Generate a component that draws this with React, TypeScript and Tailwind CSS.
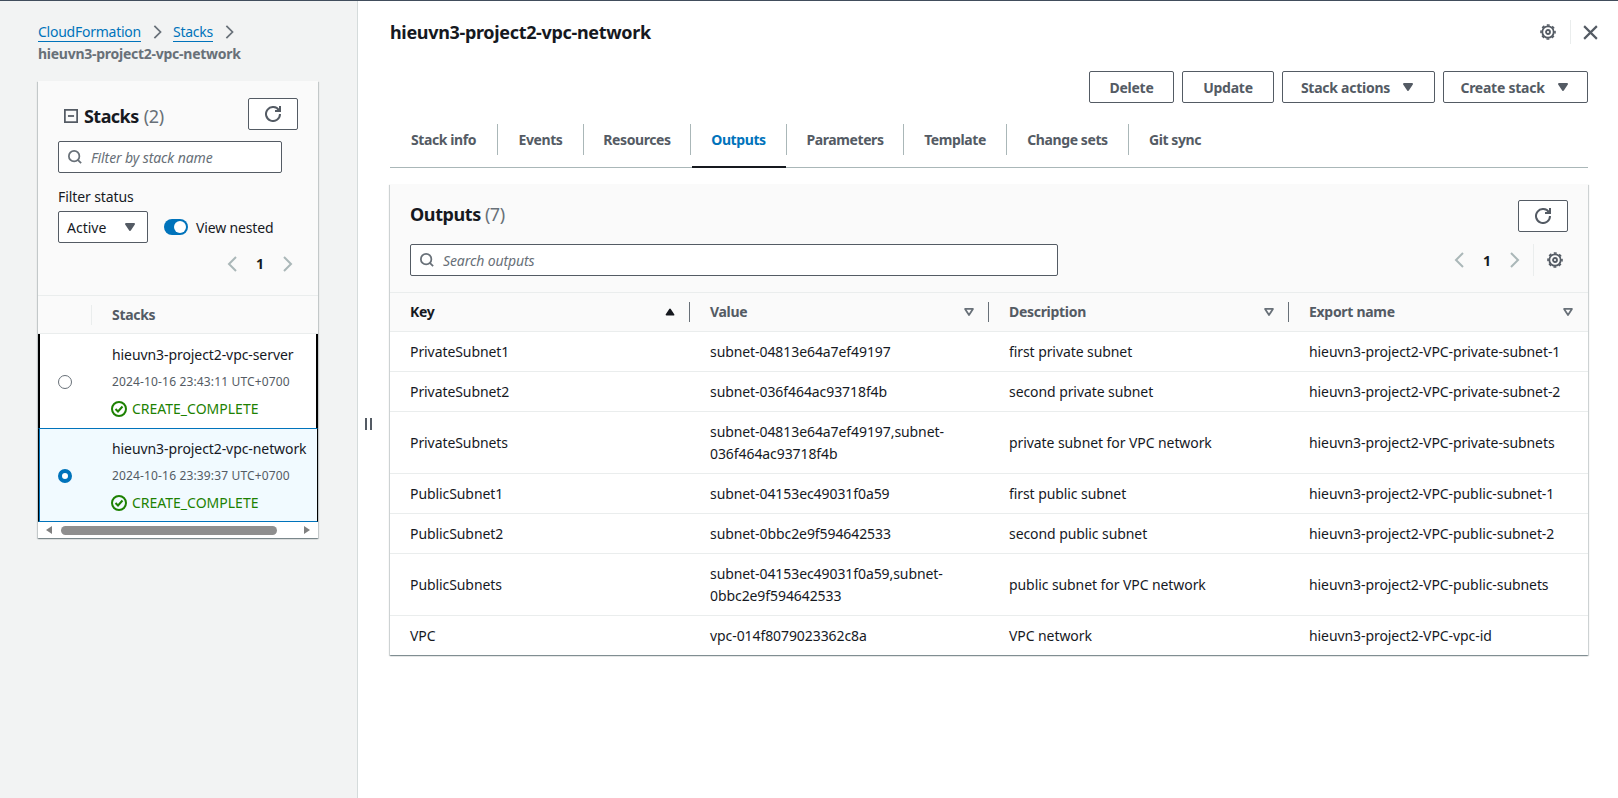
import type { ReactNode } from 'react';

const font = { fontFamily: '"Noto Sans", sans-serif' };

type IconProps = { className?: string };

function Svg({ className, children }: IconProps & { children: ReactNode }) {
  return (
    <svg viewBox="0 0 16 16" fill="none" stroke="currentColor" strokeWidth="2" className={className} aria-hidden>
      {children}
    </svg>
  );
}

const RefreshIcon = ({ className }: IconProps) => (
  <Svg className={className}>
    <path d="M10 5h5V0" />
    <path d="M15 8a7 7 0 1 1-1-3.61" />
  </Svg>
);
const SearchIcon = ({ className }: IconProps) => (
  <Svg className={className}>
    <circle cx="7" cy="7" r="6" />
    <path d="M11.2 11.2 15 15" />
  </Svg>
);
const CaretDown = ({ className }: IconProps) => (
  <svg viewBox="0 0 16 16" className={className} fill="currentColor" stroke="currentColor" strokeWidth="2" strokeLinejoin="round" aria-hidden>
    <path d="M4 5h8l-4 6z" />
  </svg>
);
const CaretUp = ({ className }: IconProps) => (
  <svg viewBox="0 0 16 16" className={className} fill="currentColor" stroke="currentColor" strokeWidth="2" strokeLinejoin="round" aria-hidden>
    <path d="M4 11h8L8 5z" />
  </svg>
);
const FilterCaret = ({ className }: IconProps) => (
  <Svg className={className}>
    <path d="M3.5 4.5h9L8 11.5z" strokeLinejoin="round" />
  </Svg>
);
const AngleLeft = ({ className }: IconProps) => (
  <Svg className={className}>
    <path d="M11 1 4 8l7 7" />
  </Svg>
);
const AngleRight = ({ className }: IconProps) => (
  <Svg className={className}>
    <path d="m5 1 7 7-7 7" />
  </Svg>
);
const GearIcon = ({ className }: IconProps) => (
  <Svg className={className}>
    <circle cx="8" cy="8" r="5.7" strokeWidth="1.8" />
    <circle cx="8" cy="8" r="7" strokeWidth="1.6" strokeDasharray="2.9 2.6" strokeDashoffset="1.4" />
    <circle cx="8" cy="8" r="2" strokeWidth="1.8" />
  </Svg>
);
const CloseIcon = ({ className }: IconProps) => (
  <Svg className={className}>
    <path d="m2 2 12 12M14 2 2 14" />
  </Svg>
);
const CollapseIcon = ({ className }: IconProps) => (
  <Svg className={className}>
    <rect x="1" y="1" width="14" height="14" />
    <path d="M4.5 8h7" />
  </Svg>
);
const StatusIcon = ({ className }: IconProps) => (
  <Svg className={className}>
    <circle cx="8" cy="8" r="7" />
    <path d="m4.5 8 2.5 2.5 4.5-5" />
  </Svg>
);

function Button({ children, className }: { children: ReactNode; className?: string }) {
  return (
    <button className={`flex h-[32px] items-center justify-center rounded-[2px] border border-[#545b64] bg-white text-[14px] font-bold tracking-[-0.25px] text-[#545b64] ${className ?? ''}`}>
      {children}
    </button>
  );
}

function Pager({ className }: { className?: string }) {
  return (
    <div className={`flex items-center text-[#aab7b8] ${className ?? ''}`}>
      <AngleLeft className="size-[16px]" />
      <span className="w-[38px] text-center text-[14px] font-bold text-[#16191f]">1</span>
      <AngleRight className="size-[16px]" />
    </div>
  );
}

const tabs = [
  { label: 'Stack info', width: 'w-[108px]' },
  { label: 'Events', width: 'w-[86px]' },
  { label: 'Resources', width: 'w-[107px]' },
  { label: 'Outputs', width: 'w-[96px]' },
  { label: 'Parameters', width: 'w-[117px]' },
  { label: 'Template', width: 'w-[103px]' },
  { label: 'Change sets', width: 'w-[122px]' },
  { label: 'Git sync', width: 'w-[92px]' },
];

const stacks = [
  { name: 'hieuvn3-project2-vpc-server', date: '2024-10-16 23:43:11 UTC+0700', selected: false },
  { name: 'hieuvn3-project2-vpc-network', date: '2024-10-16 23:39:37 UTC+0700', selected: true },
];

const outputs = [
  ['PrivateSubnet1', 'subnet-04813e64a7ef49197', 'first private subnet', 'hieuvn3-project2-VPC-private-subnet-1'],
  ['PrivateSubnet2', 'subnet-036f464ac93718f4b', 'second private subnet', 'hieuvn3-project2-VPC-private-subnet-2'],
  ['PrivateSubnets', 'subnet-04813e64a7ef49197,subnet-036f464ac93718f4b', 'private subnet for VPC network', 'hieuvn3-project2-VPC-private-subnets'],
  ['PublicSubnet1', 'subnet-04153ec49031f0a59', 'first public subnet', 'hieuvn3-project2-VPC-public-subnet-1'],
  ['PublicSubnet2', 'subnet-0bbc2e9f594642533', 'second public subnet', 'hieuvn3-project2-VPC-public-subnet-2'],
  ['PublicSubnets', 'subnet-04153ec49031f0a59,subnet-0bbc2e9f594642533', 'public subnet for VPC network', 'hieuvn3-project2-VPC-public-subnets'],
  ['VPC', 'vpc-014f8079023362c8a', 'VPC network', 'hieuvn3-project2-VPC-vpc-id'],
];

const columns = ['Key', 'Value', 'Description', 'Export name'];

function StacksCard() {
  return (
    <div className="mt-[16px] w-[280px] bg-white shadow-[0_1px_1px_0_rgba(0,28,36,0.3),1px_1px_1px_0_rgba(0,28,36,0.15),-1px_1px_1px_0_rgba(0,28,36,0.15)]">
      <div className="h-[215px] border-b border-[#eaeded] bg-[#fafafa] pl-[20px] pr-[20px]">
        <div className="flex items-start justify-between pt-[17px]">
          <div className="flex items-center pl-[6px] pt-[7px]">
            <CollapseIcon className="size-[14px] text-[#545b64]" />
            <span className="ml-[6px] text-[18px] font-bold leading-[22px] tracking-[-0.55px] text-[#16191f]">Stacks</span>
            <span className="ml-[5px] text-[18px] leading-[22px] tracking-[-0.3px] text-[#687078]">(2)</span>
          </div>
          <button className="flex h-[32px] w-[50px] items-center justify-center rounded-[2px] border border-[#545b64] bg-white text-[#545b64]">
            <RefreshIcon className="size-[16px]" />
          </button>
        </div>
        <div className="mt-[11px] flex h-[32px] w-[224px] items-center rounded-[2px] border border-[#545b64] bg-white pl-[9px]">
          <SearchIcon className="size-[14px] text-[#687078]" />
          <span className="ml-[9px] text-[14px] italic tracking-[-0.1px] text-[#687078]">Filter by stack name</span>
        </div>
        <div className="mt-[13px] text-[14px] leading-[22px] tracking-[-0.1px] text-[#16191f]">Filter status</div>
        <div className="mt-[3px] flex items-center">
          <div className="flex h-[32px] w-[90px] items-center justify-between rounded-[2px] border border-[#545b64] bg-white pl-[8px] pr-[9px] text-[14px] text-[#16191f]">
            Active
            <CaretDown className="size-[16px] text-[#545b64]" />
          </div>
          <div className="ml-[16px] flex h-[16px] w-[24px] items-center justify-end rounded-full bg-[#0073bb] pr-[2px]">
            <div className="size-[12px] rounded-full bg-white" />
          </div>
          <span className="ml-[8px] text-[14px] tracking-[-0.15px] text-[#16191f]">View nested</span>
        </div>
        <Pager className="mt-[10px] justify-end pr-[3px]" />
      </div>
      <div className="flex h-[38px] items-center border-b border-[#eaeded] bg-[#fafafa]">
        <div className="h-[20px] w-[54px] border-r border-[#eaeded]" />
        <span className="ml-[20px] text-[14px] font-bold tracking-[-0.3px] text-[#545b64]">Stacks</span>
      </div>
      {stacks.map((s) => (
        <div
          key={s.name}
          className={
            s.selected
              ? 'flex h-[94px] items-center border-x border-y border-x-black border-y-[#0073bb] bg-[#f1faff] pt-[1px] shadow-[inset_1px_0_0_#0073bb]'
              : 'flex h-[94px] items-center border-x-2 border-black bg-white pt-[2px]'
          }
        >
          <div className={s.selected ? 'w-[73px] pl-[19px]' : 'w-[72px] pl-[18px]'}>
            {s.selected ? (
              <div className="size-[14px] rounded-full border-[4px] border-[#0073bb] bg-white" />
            ) : (
              <div className="size-[14px] rounded-full border-[1px] border-[#687078] bg-white" />
            )}
          </div>
          <div className="whitespace-nowrap">
            <div className="text-[14px] leading-[22px] tracking-[-0.08px] text-[#16191f]">{s.name}</div>
            <div className="mt-[5px] text-[12px] leading-[22px] tracking-[0.15px] text-[#545b64]">{s.date}</div>
            <div className="mt-[5px] -ml-[1px] flex items-center text-[14px] leading-[22px] text-[#1d8102]">
              <StatusIcon className="mr-[5px] size-[16px]" />
              CREATE_COMPLETE
            </div>
          </div>
        </div>
      ))}
      <div className="flex h-[16px] items-center pl-[8px] pr-[8px]">
        <span className="size-0 border-y-[4px] border-r-[6px] border-y-transparent border-r-[#808080]" />
        <div className="ml-[9px] h-[9px] w-[216px] rounded-full bg-[#8e8e8e]" />
        <span className="ml-auto size-0 border-y-[4px] border-l-[6px] border-y-transparent border-l-[#808080]" />
      </div>
    </div>
  );
}

function OutputsCard() {
  return (
    <div className="mt-[16px] w-[1198px] bg-white shadow-[0_1px_1px_0_rgba(0,28,36,0.3),1px_1px_1px_0_rgba(0,28,36,0.15),-1px_1px_1px_0_rgba(0,28,36,0.15)]">
      <div className="h-[109px] border-b border-[#eaeded] bg-[#fafafa] px-[20px]">
        <div className="flex items-start justify-between pt-[16px]">
          <div className="pt-[3px] text-[18px] leading-[22px] tracking-[-0.4px]">
            <span className="font-bold text-[#16191f]">Outputs</span>
            <span className="ml-[4px] text-[#687078]">(7)</span>
          </div>
          <button className="flex h-[32px] w-[50px] items-center justify-center rounded-[2px] border border-[#545b64] bg-white text-[#545b64]">
            <RefreshIcon className="size-[16px]" />
          </button>
        </div>
        <div className="mt-[12px] flex items-center justify-between">
          <div className="flex h-[32px] w-[648px] items-center rounded-[2px] border border-[#545b64] bg-white pl-[9px]">
            <SearchIcon className="size-[14px] text-[#687078]" />
            <span className="ml-[9px] text-[14px] italic tracking-[-0.1px] text-[#687078]">Search outputs</span>
          </div>
          <div className="flex items-center">
            <Pager />
            <div className="ml-[11px] h-[32px] border-l border-[#eaeded]" />
            <GearIcon className="ml-[13px] mr-[5px] size-[16px] text-[#545b64]" />
          </div>
        </div>
      </div>
      <div className="grid h-[39px] grid-cols-[300px_299px_300px_299px] items-center border-b border-[#eaeded] bg-[#fafafa] text-[14px] font-bold tracking-[-0.3px]">
        {columns.map((c, i) => (
          <div
            key={c}
            className={
              i === 3
                ? 'flex items-center justify-between pl-[20px] pr-[13px]'
                : 'flex h-[20px] items-center justify-between border-r border-[#687078] pl-[20px] pr-[12px]'
            }
          >
            <span className={`-mt-[2px] ${i === 0 ? 'text-[#16191f]' : 'text-[#545b64]'}`}>{c}</span>
            {i === 0 ? (
              <CaretUp className="size-[14px] text-[#16191f]" />
            ) : (
              <FilterCaret className="size-[14px] text-[#687078]" />
            )}
          </div>
        ))}
      </div>
      {outputs.map((row) => (
        <div
          key={row[0]}
          className="grid grid-cols-[300px_299px_300px_299px] items-center border-b border-[#eaeded] text-[14px] leading-[22px] tracking-[-0.08px] text-[#16191f] last:border-b-0"
        >
          {row.map((cell, i) => (
            <div key={i} className="py-[8.5px] pl-[20px] pr-[18px]">
              {cell}
            </div>
          ))}
        </div>
      ))}
    </div>
  );
}

export default function App() {
  return (
    <div style={font} className="flex h-[798px] overflow-hidden border-t border-[#414d5c] bg-white">
      <aside className="h-full w-[358px] shrink-0 border-r border-[#d5dbdb] bg-[#f2f3f3] pl-[38px]">
        <div className="pt-[21px] text-[14px] leading-[22px]">
          <div className="flex items-center tracking-[-0.25px]">
            <span className="border-b border-[#0073bb] leading-[19px] text-[#0073bb]">CloudFormation</span>
            <AngleRight className="mx-[9px] size-[14px] text-[#687078]" />
            <span className="border-b border-[#0073bb] leading-[19px] text-[#0073bb]">Stacks</span>
            <AngleRight className="mx-[9px] size-[14px] text-[#687078]" />
          </div>
          <div className="mt-[1px] font-bold tracking-[-0.26px] text-[#687078]">hieuvn3-project2-vpc-network</div>
        </div>
        <StacksCard />
      </aside>
      <div className="relative flex-1 pl-[32px]">
        <div className="absolute left-[7px] top-[417px] flex gap-[3px]">
          <div className="h-[12px] w-[2px] bg-[#545b64]" />
          <div className="h-[12px] w-[2px] bg-[#545b64]" />
        </div>
        <div className="flex w-[1228px] items-center justify-between pt-[19px]">
          <h1 className="text-[18px] font-bold leading-[22px] tracking-[-0.33px] text-[#16191f]">hieuvn3-project2-vpc-network</h1>
          <div className="flex items-center pr-[19px] text-[#545b64]">
            <GearIcon className="size-[16px]" />
            <div className="ml-[14px] mr-[11px] h-[24px] border-l border-[#eaeded]" />
            <CloseIcon className="size-[17px]" />
          </div>
        </div>
        <div className="mt-[27px] flex w-[1198px] justify-end gap-[8px]">
          <Button className="w-[85px]">Delete</Button>
          <Button className="w-[92px]">Update</Button>
          <Button className="w-[153px] gap-[10px]">
            Stack actions
            <CaretDown className="size-[16px]" />
          </Button>
          <Button className="w-[145px] gap-[10px]">
            Create stack
            <CaretDown className="size-[16px]" />
          </Button>
        </div>
        <div className="relative mt-[16px] flex h-[49px] w-[1198px] border-b border-[#aab7b8] pt-[5px]">
          {tabs.map((t, i) => (
            <div key={t.label} className={`relative h-[43px] ${t.width}`}>
              <div
                className={`flex h-[31px] items-center justify-center text-[14px] font-bold tracking-[-0.4px] ${i < tabs.length - 1 ? 'border-r border-[#aab7b8]' : ''} ${t.label === 'Outputs' ? 'text-[#0073bb]' : 'text-[#545b64]'}`}
              >
                {t.label}
              </div>
              {t.label === 'Outputs' && <div className="absolute inset-x-[1px] bottom-[-1px] h-[2px] bg-[#16191f]" />}
            </div>
          ))}
        </div>
        <OutputsCard />
      </div>
    </div>
  );
}
